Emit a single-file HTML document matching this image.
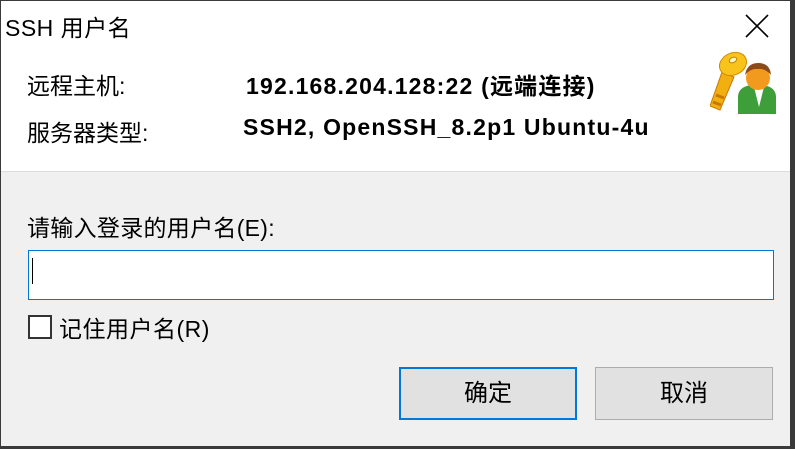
<!DOCTYPE html>
<html><head><meta charset="utf-8"><style>
*{margin:0;padding:0;box-sizing:border-box}
body{width:795px;height:449px;overflow:hidden;background:#3a3a3a;font-family:"Liberation Sans","Noto Sans CJK SC",sans-serif;position:relative}
.win{position:absolute;left:1px;top:1px;width:789px;height:445px;background:#f0f0f0;overflow:hidden}
.top{position:absolute;left:0;top:0;width:789px;height:171px;background:#fff;border-bottom:1px solid #dcdcdc}
.t{position:absolute;white-space:nowrap;color:#000}
.b{font-weight:bold;font-size:23px;letter-spacing:1.2px}
.btn{position:absolute;top:366px;height:53px;width:178px;background:#e1e1e1;border:1px solid #adadad;font-size:24px;text-align:center;line-height:51px}
</style></head><body>
<div class="win">
<div class="top">
<div class="t" style="left:4px;top:8px;font-size:23px;letter-spacing:0.5px">SSH 用户名</div>
<svg style="position:absolute;left:744px;top:13px" width="24" height="24"><path d="M1 1L23 23M23 1L1 23" stroke="#000" stroke-width="1.6"/></svg>
<div class="t" style="left:26px;top:66px;font-size:23px">远程主机:</div>
<div class="t b" style="left:245px;top:66px">192.168.204.128:22 (远端连接)</div>
<div class="t" style="left:26px;top:113px;font-size:23px">服务器类型:</div>
<div class="t b" style="left:242px;top:113px">SSH2, OpenSSH_8.2p1 Ubuntu-4u</div>
<svg style="position:absolute;left:709px;top:50px" width="70" height="66" viewBox="709 50 70 66">
<path d="M737 96 Q737 86 750 84 L756 88 L762 84 Q775 86 775 96 L775 113 L737 113Z" fill="#3e9e3a"/>
<path d="M753 86 L758 106 L763 86Z" fill="#fff"/>
<circle cx="757" cy="77" r="12" fill="#f29a1e"/>
<path d="M744 74 Q746 62 757 62 Q769 62 770 74 Q764 67 757 68 Q750 67 744 74Z" fill="#8a4a1a"/>
<path d="M721 71 L733 76 L719 109 L709 105Z" fill="#f2b010" stroke="#c87800" stroke-width="1"/>
<path d="M715 94 L723 97 M712 101 L720 104" stroke="#c87800" stroke-width="3"/>
<ellipse cx="732" cy="63" rx="14" ry="11" transform="rotate(-25 732 63)" fill="#f8c41c" stroke="#d08a00"/>
<ellipse cx="732" cy="59" rx="4" ry="2.5" transform="rotate(-25 732 59)" fill="#fff6c0" stroke="#c08000"/>
</svg>
</div>
<div class="t" style="left:26px;top:208px;font-size:23px;letter-spacing:0.3px">请输入登录的用户名(E):</div>
<div style="position:absolute;left:27px;top:249px;width:746px;height:50px;background:#fff;border:1px solid #0078d7"></div>
<div style="position:absolute;left:31px;top:257px;width:1px;height:26px;background:#000"></div>
<div style="position:absolute;left:27px;top:314px;width:24px;height:24px;background:#fff;border:2px solid #333"></div>
<div class="t" style="left:58px;top:309px;font-size:23px;letter-spacing:0.5px">记住用户名(R)</div>
<div class="btn" style="left:398px;border:2px solid #0078d7;line-height:49px">确定</div>
<div class="btn" style="left:594px">取消</div>
</div>
</body></html>
